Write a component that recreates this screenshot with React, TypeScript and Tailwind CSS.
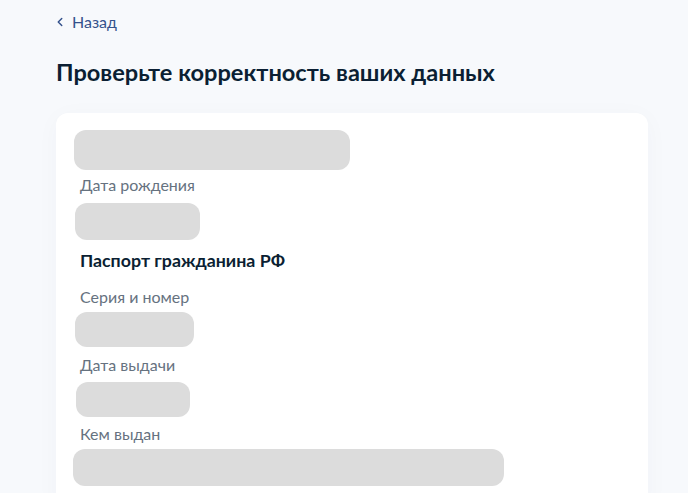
import { ChevronLeft } from 'lucide-react';

const font = { fontFamily: 'Lato, "Noto Sans", sans-serif' };

function Skeleton({ className }: { className: string }) {
    return <div className={`bg-[#dcdcdc] rounded-[12px] ${className}`} />;
}

function Label({ children, className }: { children: string; className: string }) {
    return <div className={`ml-[6px] text-[16px] leading-[20px] text-[#66727f] ${className}`}>{children}</div>;
}

export default function App() {
    return (
        <div className="min-h-[493px] bg-[#f7f9fc] pl-[56px] pr-[40px] pt-[12px] overflow-hidden" style={font}>
            <a href="#" className="flex items-center gap-[5px] text-[16px] leading-[20px] text-[#34528c]">
                <ChevronLeft className="w-[14px] h-[14px] -ml-[3px]" strokeWidth={2.5} />
                <span>Назад</span>
            </a>

            <h1 className="mt-[24px] text-[23.6px] leading-[32px] font-bold text-[#0b1f33]">
                Проверьте корректность ваших данных
            </h1>

            <div className="mt-[25px] bg-white rounded-[12px] shadow-[0_4px_24px_rgba(0,30,80,0.03)] pl-[18px] pr-[24px] pt-[17px] pb-[24px] flex flex-col items-start">
                <Skeleton className="w-[276px] h-[40px]" />
                <Label className="mt-[5px]">Дата рождения</Label>
                <Skeleton className="ml-[1px] mt-[8px] w-[125px] h-[37px]" />

                <div className="ml-[6px] mt-[8px] text-[17.8px] leading-[24px] font-bold text-[#0b1f33]">
                    Паспорт гражданина РФ
                </div>

                <Label className="mt-[15px]">Серия и номер</Label>
                <Skeleton className="ml-[1px] mt-[5px] w-[119px] h-[35px]" />

                <Label className="mt-[8px]">Дата выдачи</Label>
                <Skeleton className="ml-[2px] mt-[7px] w-[114px] h-[35px]" />

                <Label className="mt-[7px]">Кем выдан</Label>
                <Skeleton className="-ml-[1px] mt-[5px] w-[431px] h-[37px]" />
            </div>
        </div>
    );
}
